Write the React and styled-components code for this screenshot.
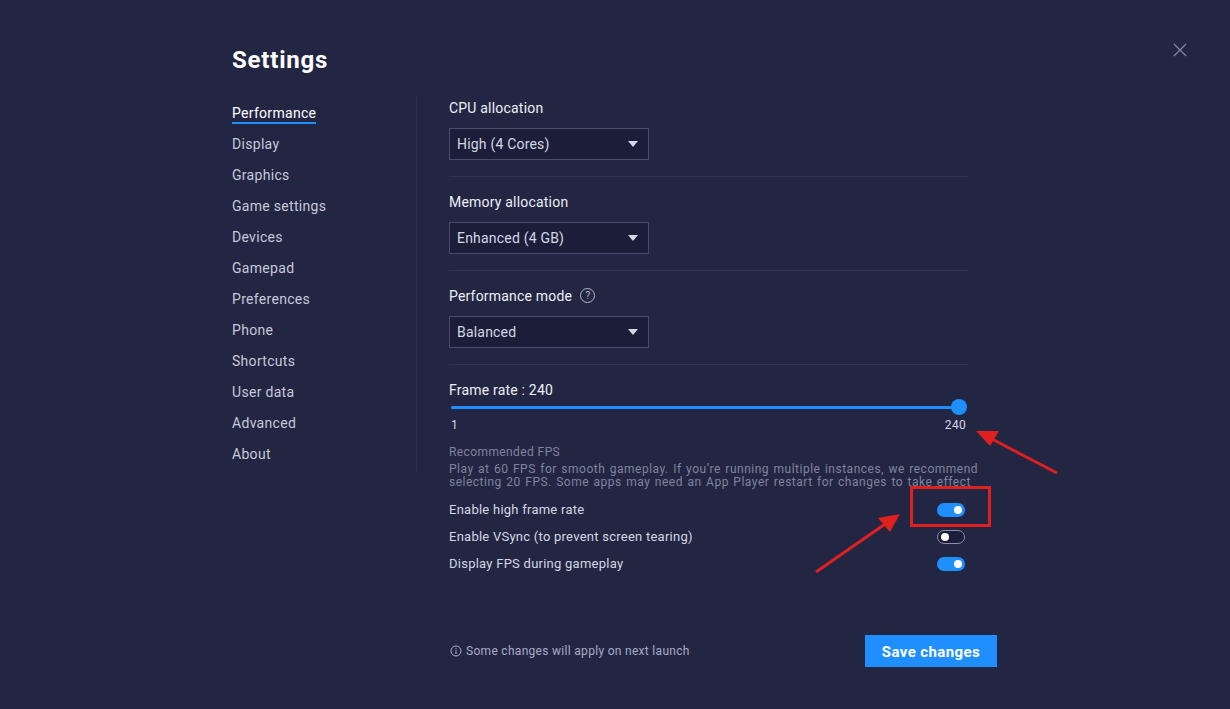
import React from "react";
import styled, { createGlobalStyle } from "styled-components";

const Global = createGlobalStyle`
  html, body { margin: 0; padding: 0; background: #232642; }
  * { box-sizing: border-box; }
  body { font-family: Roboto, "Noto Sans", "Liberation Sans", sans-serif; }
`;

const Page = styled.div`
  position: relative;
  width: 1230px;
  height: 709px;
  background: #232642;
  overflow: hidden;
  color: #e4e6f0;
`;

const Header = styled.header`
  display: flex;
  justify-content: space-between;
  align-items: flex-start;
  padding: 45px 42px 0 232px;
  height: 97px;
`;

const Title = styled.h1`
  margin: 0;
  font-size: 24px;
  line-height: 30px;
  font-weight: 700;
  color: #ffffff;
  letter-spacing: 0.8px;
`;

const Close = styled.button`
  margin-top: -3px;
  width: 16px;
  height: 16px;
  padding: 0;
  border: 0;
  background: none;
  color: #7d82a0;
  display: flex;
`;

const Body = styled.div`
  display: flex;
  padding-left: 232px;
`;

const Sidebar = styled.nav`
  width: 185px;
  height: 375px;
  border-right: 1px solid #2d3150;
  display: flex;
  flex-direction: column;
`;

const NavItem = styled.div`
  font-size: 14px;
  line-height: 31px;
  height: 31px;
  letter-spacing: 0.3px;
  color: ${(p) => (p.$active ? "#ffffff" : "#c6c9da")};
  display: flex;
  span {
    line-height: 18px;
    margin-top: 7px;
    height: 18px;
    border-bottom: ${(p) => (p.$active ? "2px solid #1f8fff" : "none")};
    box-sizing: content-box;
  }
`;

const Content = styled.div`
  padding-left: 32px;
  width: 551px;
  display: flex;
  flex-direction: column;
`;

const Section = styled.section`
  width: 519px;
  padding: ${(p) => (p.$first ? "0" : "14px")} 0 16px;
  border-bottom: 1px solid #30344f;
`;

const Label = styled.div`
  font-size: 14px;
  line-height: 20px;
  height: 21px;
  padding-top: 0.5px;
  letter-spacing: 0.2px;
  color: #eceef6;
  display: flex;
  align-items: center;
  gap: 8px;
`;

const Help = styled.span`
  width: 15px;
  height: 15px;
  border: 1px solid #b5b9cc;
  border-radius: 50%;
  font-size: 10px;
  line-height: 13px;
  text-align: center;
  color: #b5b9cc;
  letter-spacing: 0;
`;

const Select = styled.div`
  margin-top: 10px;
  width: 200px;
  height: 32px;
  background: #1c1e39;
  border: 1px solid #474b6c;
  display: flex;
  align-items: center;
  justify-content: space-between;
  padding: 0 10px 0 7px;
  font-size: 14px;
  letter-spacing: 0.2px;
  color: #d4d7e4;
`;

const Caret = styled.span`
  width: 0;
  height: 0;
  border-left: 5px solid transparent;
  border-right: 5px solid transparent;
  border-top: 6px solid #d4d7e4;
`;

const FrameBlock = styled.section`
  padding-top: 14px;
  width: 519px;
`;

const Slider = styled.div`
  position: relative;
  margin: -1px 0 0 2px;
  height: 16px;
  display: flex;
  align-items: center;
  padding-right: 16px;
`;

const Track = styled.div`
  flex: 1;
  height: 3px;
  border-radius: 2px;
  background: #1f8fff;
`;

const Thumb = styled.div`
  position: absolute;
  right: 1px;
  top: 0;
  width: 16px;
  height: 16px;
  border-radius: 50%;
  background: #1f8fff;
`;

const Ticks = styled.div`
  display: flex;
  justify-content: space-between;
  font-size: 12px;
  line-height: 16px;
  padding: 2px 2px 0 2px;
  letter-spacing: 0.3px;
  color: #d4d7e4;
`;

const Muted = styled.div`
  margin-top: 11px;
  font-size: 12px;
  line-height: 16px;
  letter-spacing: 0.4px;
  color: #7f849f;
`;

const Para = styled.p`
  margin: 3px 0 0;
  width: 545px;
  font-size: 12px;
  line-height: 13px;
  height: 24px;
  white-space: nowrap;
  letter-spacing: 0.5px;
  word-spacing: 1px;
  color: #7f849f;
`;

const Toggles = styled.div`
  margin-top: 9px;
  width: 519px;
  display: flex;
  flex-direction: column;
`;

const ToggleRow = styled.div`
  height: 27px;
  display: flex;
  align-items: center;
  justify-content: space-between;
  font-size: 13px;
  letter-spacing: 0.25px;
  color: #d4d7e4;
  padding-right: 3px;
`;

const Switch = styled.span`
  width: 28px;
  height: 14px;
  border-radius: 7px;
  display: flex;
  align-items: center;
  padding: 0 3px;
  justify-content: ${(p) => (p.$on ? "flex-end" : "flex-start")};
  background: ${(p) => (p.$on ? "#1f8fff" : "#1c1e39")};
  border: ${(p) => (p.$on ? "none" : "1.5px solid #8a8ea8")};
  &::after {
    content: "";
    width: 8px;
    height: 8px;
    border-radius: 50%;
    background: #ffffff;
  }
`;

const Footer = styled.footer`
  margin-top: 58px;
  width: 548px;
  display: flex;
  align-items: center;
  justify-content: space-between;
`;

const Note = styled.div`
  display: flex;
  align-items: center;
  gap: 4px;
  padding: 0 0 0 1px;
  font-size: 12px;
  letter-spacing: 0.3px;
  color: #a6abc6;
`;

const SaveButton = styled.button`
  width: 132px;
  height: 32px;
  border: 0;
  padding: 1px 0 0;
  background: #1f8fff;
  color: #ffffff;
  font-family: inherit;
  font-size: 15px;
  letter-spacing: 0.4px;
  font-weight: 700;
`;

const Annotations = styled.svg`
  position: absolute;
  left: 0;
  top: 0;
  pointer-events: none;
`;

const nav = [
  "Performance",
  "Display",
  "Graphics",
  "Game settings",
  "Devices",
  "Gamepad",
  "Preferences",
  "Phone",
  "Shortcuts",
  "User data",
  "Advanced",
  "About",
];

export default function App() {
  return (
    <Page>
      <Global />
      <Header>
        <Title>Settings</Title>
        <Close aria-label="close">
          <svg width="16" height="16" viewBox="0 0 16 16">
            <path d="M2 2L14 14M14 2L2 14" stroke="#7d82a0" strokeWidth="1.4" />
          </svg>
        </Close>
      </Header>
      <Body>
        <Sidebar>
          {nav.map((n, i) => (
            <NavItem key={n} $active={i === 0}>
              <span>{n}</span>
            </NavItem>
          ))}
        </Sidebar>
        <Content>
          <Section $first>
            <Label>CPU allocation</Label>
            <Select>
              High (4 Cores)
              <Caret />
            </Select>
          </Section>
          <Section>
            <Label>Memory allocation</Label>
            <Select>
              Enhanced (4 GB)
              <Caret />
            </Select>
          </Section>
          <Section>
            <Label>
              Performance mode <Help>?</Help>
            </Label>
            <Select>
              Balanced
              <Caret />
            </Select>
          </Section>
          <FrameBlock>
            <Label>Frame rate : 240</Label>
            <Slider>
              <Track />
              <Thumb />
            </Slider>
            <Ticks>
              <span>1</span>
              <span>240</span>
            </Ticks>
            <Muted>Recommended FPS</Muted>
            <Para>
              Play at 60 FPS for smooth gameplay. If you’re running multiple instances, we recommend
              <br />
              selecting 20 FPS. Some apps may need an App Player restart for changes to take effect
            </Para>
          </FrameBlock>
          <Toggles>
            <ToggleRow>
              <span>Enable high frame rate</span>
              <Switch $on />
            </ToggleRow>
            <ToggleRow>
              <span>Enable VSync (to prevent screen tearing)</span>
              <Switch />
            </ToggleRow>
            <ToggleRow>
              <span>Display FPS during gameplay</span>
              <Switch $on />
            </ToggleRow>
          </Toggles>
          <Footer>
            <Note>
              <svg width="12" height="12" viewBox="0 0 12 12">
                <circle cx="6" cy="6" r="5" fill="none" stroke="#a6abc6" strokeWidth="1" />
                <path d="M6 5.2V9" stroke="#a6abc6" strokeWidth="1.1" />
                <circle cx="6" cy="3.6" r="0.7" fill="#a6abc6" />
              </svg>
              Some changes will apply on next launch
            </Note>
            <SaveButton>Save changes</SaveButton>
          </Footer>
        </Content>
      </Body>
      <Annotations width="1230" height="709" viewBox="0 0 1230 709">
        <rect x="911.5" y="487.5" width="78" height="38" fill="none" stroke="#e01f1f" strokeWidth="3" />
        <path d="M1057 473L990 438" stroke="#e01f1f" strokeWidth="3" />
        <polygon points="976,431 999,431 990,446" fill="#e01f1f" />
        <path d="M816 572L888 522" stroke="#e01f1f" strokeWidth="3" />
        <polygon points="900,514 878,518 890,532" fill="#e01f1f" />
      </Annotations>
    </Page>
  );
}
